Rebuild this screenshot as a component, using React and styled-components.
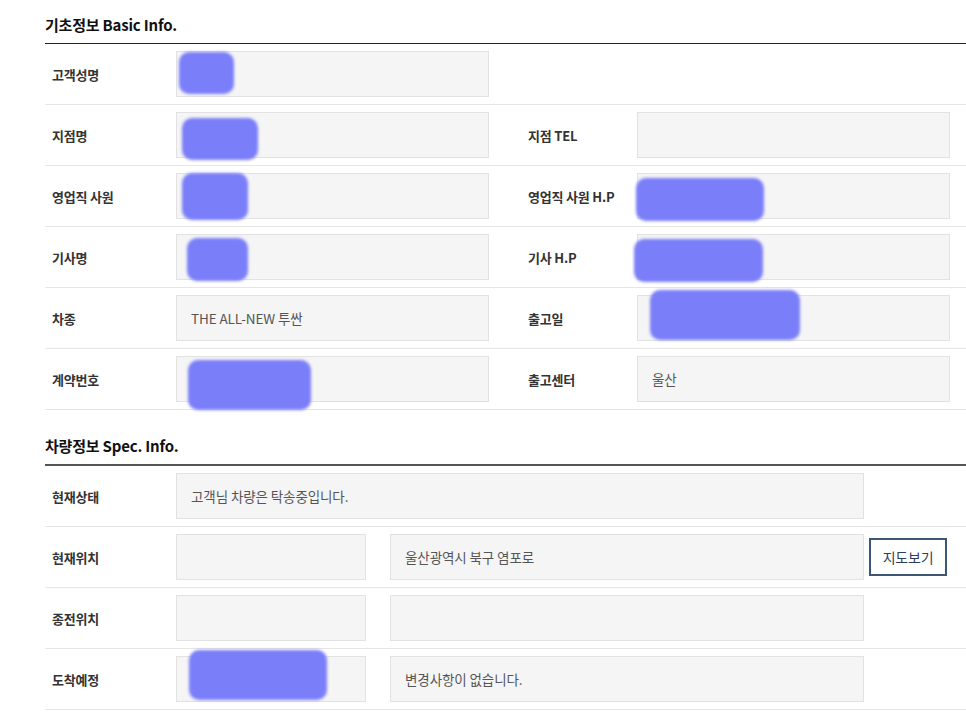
import React from 'react';
import styled, { createGlobalStyle } from 'styled-components';

const GlobalStyle = createGlobalStyle`
  body {
    margin: 0;
    background: #fff;
    font-family: 'Noto Sans CJK KR', 'Noto Sans', sans-serif;
    color: #333;
  }
`;

const Page = styled.div`
  padding: 14px 0 0 45px;
  width: 921px;
`;

const SectionTitle = styled.h2`
  margin: ${p => (p.$first ? '0' : '25px')} 0 0;
  padding-bottom: 7px;
  border-bottom: ${p => (p.$first ? '1px solid #222' : '2px solid #555')};
  font-size: 15px;
  line-height: 22px;
  font-weight: 700;
  letter-spacing: -0.2px;
  color: #111;
`;

const Row = styled.div`
  display: grid;
  grid-template-columns: ${p => p.$cols};
  align-items: center;
  padding: 7px 0;
  border-bottom: 1px solid #e6e6e6;
`;

const Label = styled.div`
  padding-left: 7px;
  font-size: 13px;
  font-weight: 700;
  letter-spacing: -0.2px;
  color: #333;
`;

const Field = styled.div`
  position: relative;
  box-sizing: border-box;
  height: 46px;
  display: flex;
  align-items: center;
  padding-left: 14px;
  background: #f5f5f5;
  border: 1px solid #e2e2e2;
  font-size: 13.5px;
  letter-spacing: -0.1px;
  color: #555;
  grid-column: ${p => p.$span || 'auto'};
`;

const Redact = styled.span`
  position: absolute;
  background: #7a7ef9;
  border-radius: 10px;
  filter: blur(1.6px);
`;

const Spacer = styled.div``;

const MapButton = styled.button`
  box-sizing: border-box;
  height: 38px;
  margin-left: 5px;
  width: 78px;
  background: #fff;
  border: 2px solid #3d5674;
  color: #2b3f5c;
  font-family: 'Noto Sans CJK KR', sans-serif;
  font-size: 14px;
  letter-spacing: -0.2px;
  cursor: pointer;
`;

const basicCols = '131px 313px 32px 116px 313px';
const specCols = '131px 190px 24px 474px 83px';

// blob: [left, top, width, height] relative to the field box
const Blob = ({ box }) => (
  <Redact style={{ left: box[0], top: box[1], width: box[2], height: box[3] }} />
);

const BasicRow = ({ left, leftVal, leftBlob, right, rightVal, rightBlob }) => (
  <Row $cols={basicCols}>
    <Label>{left}</Label>
    <Field>
      {leftVal}
      {leftBlob && <Blob box={leftBlob} />}
    </Field>
    <Spacer />
    {right ? (
      <>
        <Label>{right}</Label>
        <Field>
          {rightVal}
          {rightBlob && <Blob box={rightBlob} />}
        </Field>
      </>
    ) : null}
  </Row>
);

export default function App() {
  return (
    <>
      <GlobalStyle />
      <Page>
        <SectionTitle $first>기초정보 Basic Info.</SectionTitle>
        <BasicRow left="고객성명" leftBlob={[2, 0, 55, 42]} />
        <BasicRow left="지점명" leftBlob={[5, 5, 76, 42]} right="지점 TEL" />
        <BasicRow
          left="영업직 사원"
          leftBlob={[5, -1, 66, 47]}
          right="영업직 사원 H.P"
          rightBlob={[-2, 4, 128, 43]}
        />
        <BasicRow
          left="기사명"
          leftBlob={[10, 3, 61, 43]}
          right="기사 H.P"
          rightBlob={[-4, 4, 129, 43]}
        />
        <BasicRow
          left="차종"
          leftVal="THE ALL-NEW 투싼"
          right="출고일"
          rightBlob={[12, -6, 150, 50]}
        />
        <BasicRow
          left="계약번호"
          leftBlob={[11, 3, 123, 50]}
          right="출고센터"
          rightVal="울산"
        />

        <SectionTitle>차량정보 Spec. Info.</SectionTitle>
        <Row $cols={specCols}>
          <Label>현재상태</Label>
          <Field $span="2 / 5">고객님 차량은 탁송중입니다.</Field>
        </Row>
        <Row $cols={specCols}>
          <Label>현재위치</Label>
          <Field />
          <Spacer />
          <Field>울산광역시 북구 염포로</Field>
          <MapButton>지도보기</MapButton>
        </Row>
        <Row $cols={specCols}>
          <Label>종전위치</Label>
          <Field />
          <Spacer />
          <Field />
        </Row>
        <Row $cols={specCols}>
          <Label>도착예정</Label>
          <Field>
            <Blob box={[12, -7, 138, 50]} />
          </Field>
          <Spacer />
          <Field>변경사항이 없습니다.</Field>
        </Row>
      </Page>
    </>
  );
}
